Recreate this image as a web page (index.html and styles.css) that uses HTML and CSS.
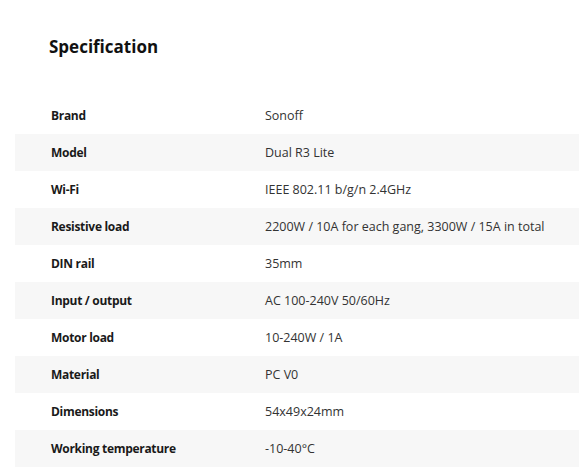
FILE: index.html
```html
<!DOCTYPE html>
<html>
<head>
<meta charset="utf-8">
<link rel="stylesheet" href="styles.css">
</head>
<body>
<div class="page">
  <h2 class="title">Specification</h2>
  <table class="spec">
    <tr><td class="k">Brand</td><td class="v">Sonoff</td></tr>
    <tr><td class="k">Model</td><td class="v">Dual R3 Lite</td></tr>
    <tr><td class="k">Wi-Fi</td><td class="v">IEEE 802.11 b/g/n 2.4GHz</td></tr>
    <tr><td class="k">Resistive load</td><td class="v">2200W / 10A for each gang, 3300W / 15A in total</td></tr>
    <tr><td class="k">DIN rail</td><td class="v">35mm</td></tr>
    <tr><td class="k">Input / output</td><td class="v">AC 100-240V 50/60Hz</td></tr>
    <tr><td class="k">Motor load</td><td class="v">10-240W / 1A</td></tr>
    <tr><td class="k">Material</td><td class="v">PC V0</td></tr>
    <tr><td class="k">Dimensions</td><td class="v">54x49x24mm</td></tr>
    <tr><td class="k">Working temperature</td><td class="v">-10-40°C</td></tr>
  </table>
</div>
</body>
</html>
```
FILE: styles.css
```css
html, body { margin: 0; padding: 0; background: #fff; }
body { font-family: "Open Sans", "Liberation Sans", sans-serif; color: #222; overflow: hidden; }
.page { padding: 36px 0 0 15px; }
.title { margin: 0 0 0 34px; font-size: 17px; font-weight: 700; line-height: 22px; color: #111; }
.spec { margin-top: 39px; border-collapse: collapse; width: 100%; }
.spec tr { height: 37px; }
.spec tr:nth-child(even) { background: #f7f7f7; }
.spec td { padding: 0; font-size: 12.5px; vertical-align: middle; }
.spec .k { width: 214px; padding-left: 36px; font-size: 12px; font-weight: 700; letter-spacing: -0.3px; color: #1a1a1a; }
.spec .v { color: #333; }
```
